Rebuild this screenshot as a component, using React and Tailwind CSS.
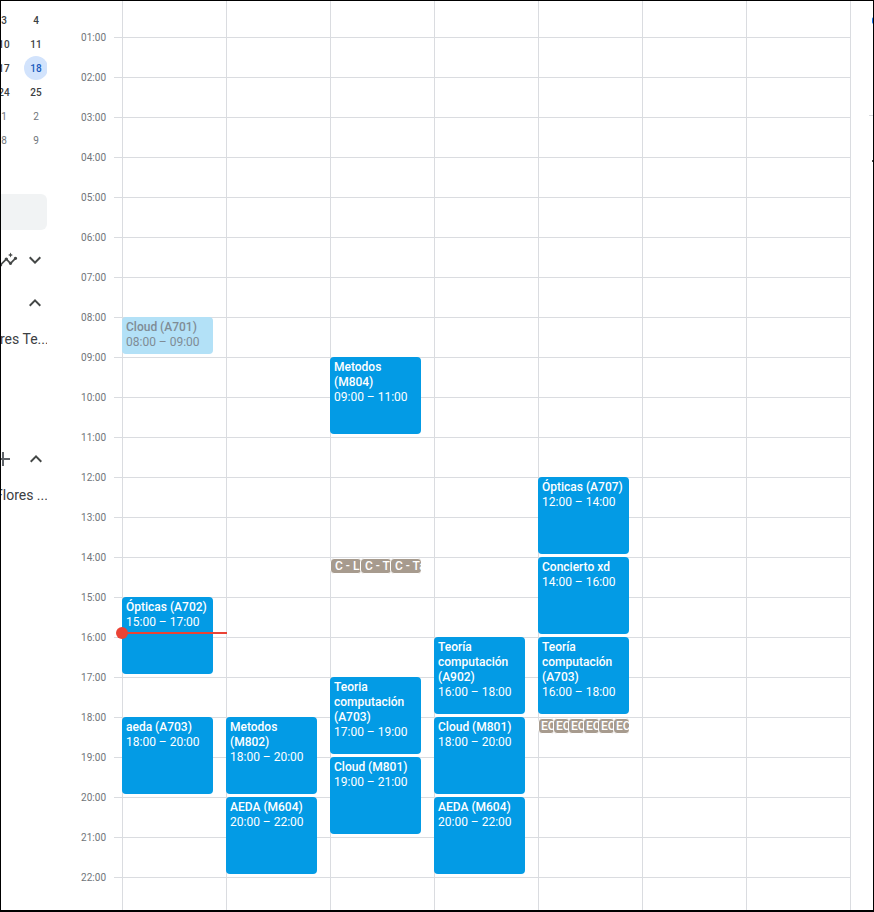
import React from "react";

const HOURS = Array.from({ length: 22 }, (_, i) => i + 1);

const MINI = [
  [3, 4, false],
  [10, 11, false],
  [17, 18, false],
  [24, 25, false],
  [1, 2, true],
  [8, 9, true],
];

const DAYS = [
  {
    events: [
      { title: "Cloud (A701)", start: 8, end: 9, past: true },
      { title: "Ópticas (A702)", start: 15, end: 17 },
      { title: "aeda (A703)", start: 18, end: 20 },
    ],
    now: true,
  },
  {
    events: [
      { title: "Metodos (M802)", start: 18, end: 20 },
      { title: "AEDA (M604)", start: 20, end: 22 },
    ],
  },
  {
    events: [
      { title: "Metodos (M804)", start: 9, end: 11 },
      { title: "Teoria computación (A703)", start: 17, end: 19 },
      { title: "Cloud (M801)", start: 19, end: 21 },
    ],
    chips: { at: 14, width: "w-[32px]", pad: "pl-1", items: ["C - L", "C - T", "C - Ta"] },
  },
  {
    events: [
      { title: "Teoría computación (A902)", start: 16, end: 18 },
      { title: "Cloud (M801)", start: 18, end: 20 },
      { title: "AEDA (M604)", start: 20, end: 22 },
    ],
  },
  {
    events: [
      { title: "Ópticas (A707)", start: 12, end: 14 },
      { title: "Concierto xd", start: 14, end: 16 },
      { title: "Teoría computación (A703)", start: 16, end: 18 },
    ],
    chips: { at: 18, width: "w-[17px]", pad: "pl-[2px]", items: ["EC", "EC", "EC", "EC", "EC", "EC"] },
  },
  { events: [] },
  { events: [] },
];

const pad = (n) => String(n).padStart(2, "0") + ":00";

function ChevronDown() {
  return (
    <svg width="24" height="24" viewBox="0 0 24 24" fill="#444746">
      <path d="M16.59 8.59L12 13.17 7.41 8.59 6 10l6 6 6-6z" />
    </svg>
  );
}

function ChevronUp() {
  return (
    <svg width="24" height="24" viewBox="0 0 24 24" fill="#444746">
      <path d="M7.41 15.41L12 10.83l4.59 4.58L18 14l-6-6-6 6z" />
    </svg>
  );
}

function HourRows() {
  return (
    <div className="flex flex-col">
      <div className="h-[36px] shrink-0" />
      {HOURS.map((h) => (
        <div key={h} className="h-10 shrink-0 border-t border-[#dadce0]" />
      ))}
    </div>
  );
}

function Event({ ev }) {
  const top = 40 * ev.start - 4;
  const height = 40 * (ev.end - ev.start) - 3;
  return (
    <div
      className={
        "absolute left-[-1px] w-[91px] rounded-[4px] overflow-hidden pl-1 pr-[2px] pt-[3px] text-[12px] leading-[15px] " +
        (ev.past ? "bg-[#b3e1f7] text-[#7f8c95]" : "bg-[#039be5] text-white")
      }
      style={{ top, height }}
    >
      <div className="font-medium">{ev.title}</div>
      <div>
        {pad(ev.start)} – {pad(ev.end)}
      </div>
    </div>
  );
}

function Chips({ chips }) {
  return (
    <div
      className="absolute left-[-1px] w-[91px] h-[16px] flex overflow-hidden"
      style={{ top: 40 * chips.at - 3 }}
    >
      {chips.items.map((c, i) => (
        <div
          key={i}
          className={
            "shrink-0 h-[16px] rounded-[4px] border border-white bg-[#a79b8e] text-white text-[12px] leading-[14px] font-medium whitespace-nowrap overflow-hidden " +
            chips.width +
            " " +
            chips.pad +
            (i > 0 ? " -ml-[2px]" : "")
          }
        >
          {c}
        </div>
      ))}
    </div>
  );
}

export default function App() {
  return (
    <div className="w-[874px] h-[912px] bg-white border-t border-l border-r border-b-2 border-black flex overflow-hidden font-['Roboto',sans-serif]">
      {/* sidebar, mostly scrolled off to the left */}
      <div className="w-[46px] shrink-0 overflow-hidden flex flex-col text-[#3c4043]">
        <div className="pt-[7px] ml-[-13px] flex flex-col">
          {MINI.map(([a, b, other], i) => (
            <div key={i} className="flex h-6">
              {[a, b].map((d) => (
                <div key={d} className="w-8 h-6 shrink-0 flex items-center justify-center">
                  <span
                    className={
                      "w-6 h-6 rounded-full flex items-center justify-center text-[10px] " +
                      (d === 18
                        ? "bg-[#d2e3fc] text-[#185abc] font-medium"
                        : other
                        ? "text-[#70757a]"
                        : "font-medium text-[#3c4043]")
                    }
                  >
                    {d}
                  </span>
                </div>
              ))}
            </div>
          ))}
        </div>

        <div className="mt-[42px] h-[36px] w-[46px] shrink-0 bg-[#f1f3f4] rounded-r-[6px]" />

        <div className="mt-[18px] h-6 flex items-center">
          <svg width="20" height="20" viewBox="0 0 24 24" fill="#444746" className="ml-[-3px] shrink-0">
            <path d="M21 8c-1.45 0-2.26 1.44-1.93 2.51l-3.55 3.56c-.3-.09-.74-.09-1.04 0l-2.55-2.55C12.27 10.45 11.46 9 10 9c-1.45 0-2.27 1.44-1.93 2.52l-4.56 4.55C2.44 15.74 1 16.55 1 18c0 1.1.9 2 2 2 1.45 0 2.26-1.44 1.93-2.51l4.55-4.56c.3.09.74.09 1.04 0l2.55 2.55C12.73 16.55 13.54 18 15 18c1.45 0 2.27-1.44 1.93-2.52l3.56-3.55c1.07.33 2.51-.48 2.51-1.93 0-1.1-.9-2-2-2zm-6 1l.94-2.07L18 6l-2.06-.93L15 3l-.92 2.07L12 6l2.08.93z" />
          </svg>
          <div className="ml-[5px] shrink-0">
            <ChevronDown />
          </div>
        </div>

        <div className="mt-[19px] h-6 flex items-center pl-[22px]">
          <ChevronUp />
        </div>

        <div className="mt-[14px] h-5 flex items-center whitespace-nowrap text-[14px] ml-[-1px]">
          res Te...
        </div>

        <div className="mt-[98px] h-6 flex items-center">
          <svg width="24" height="24" viewBox="0 0 24 24" fill="#5f6368" className="ml-[-10px] shrink-0">
            <path d="M19 13h-6v6h-2v-6H5v-2h6V5h2v6h6v2z" />
          </svg>
          <div className="ml-[9px] shrink-0">
            <ChevronUp />
          </div>
        </div>

        <div className="mt-[14px] h-5 flex items-center whitespace-nowrap text-[14px] ml-[-6px]">
          Flores ...
        </div>
      </div>

      {/* time gutter */}
      <div className="w-[67px] shrink-0 pt-[29px] pr-2 flex flex-col items-end text-[10px] leading-4 text-[#70757a]">
        {HOURS.map((h) => (
          <div key={h} className="h-10 shrink-0">
            {pad(h)}
          </div>
        ))}
      </div>
      <div className="w-[8px] shrink-0">
        <HourRows />
      </div>

      {/* week grid */}
      <div className="flex shrink-0 border-r border-[#dadce0]">
        {DAYS.map((day, i) => (
          <div key={i} className="w-[104px] shrink-0 border-l border-[#dadce0] relative">
            <HourRows />
            {day.events.map((ev, j) => (
              <Event key={j} ev={ev} />
            ))}
            {day.chips && <Chips chips={day.chips} />}
            {day.now && (
              <>
                <div className="absolute left-[-1px] right-[-1px] top-[631px] h-[2px] bg-[#ea4335] z-10" />
                <div className="absolute left-[-7px] top-[626px] w-3 h-3 rounded-full bg-[#ea4335] z-10" />
              </>
            )}
          </div>
        ))}
      </div>

      {/* edge of the side panel */}
      <div className="w-[22px] shrink-0 flex flex-col">
        <div className="ml-[21px] mt-[16px] w-[8px] h-[7px] bg-[#1a73e8] rounded-[2px]" />
        <div className="ml-[18px] mt-[91px] w-[10px] h-px bg-[#dadce0]" />
        <div className="ml-[21px] mt-[44px] w-[4px] h-[2px] bg-[#444746]" />
      </div>
    </div>
  );
}
